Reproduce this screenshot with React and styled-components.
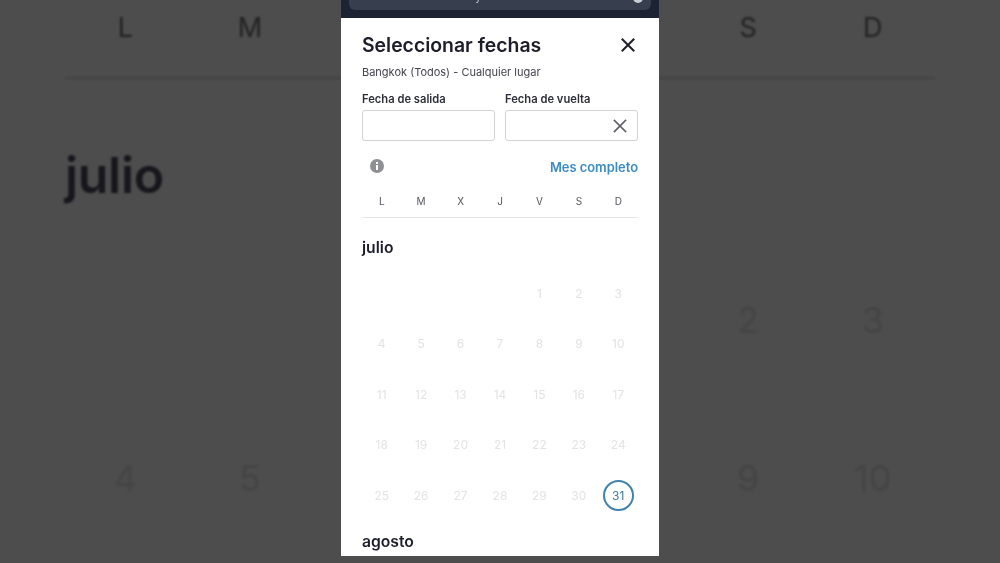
import React from 'react';
import styled, { createGlobalStyle } from 'styled-components';

const Global = createGlobalStyle`
  html, body { margin: 0; padding: 0; background: #4d4d4d; }
  body { font-family: "Inter", "Noto Sans", sans-serif; }
`;

const Page = styled.div`
  position: relative;
  width: 1000px;
  height: 563px;
  overflow: hidden;
  background: #4d4d4d;
`;

const Backdrop = styled.div`
  padding: 0 65px;
  filter: blur(0.9px);
`;

const BackWeek = styled.div`
  display: grid;
  grid-template-columns: repeat(7, 1fr);
  margin-left: -2px;
  height: 77px;
  padding-top: 10px;
  box-sizing: border-box;
  font-size: 27px;
  font-weight: 400;
  line-height: 36px;
  text-align: center;
  color: #222;
`;

const BackRule = styled.div`
  height: 2px;
  background: #444242;
`;

const BackMonth = styled.div`
  margin-top: 66px;
  font-size: 50px;
  font-weight: 600;
  letter-spacing: -0.3px;
  line-height: 60px;
  color: #16161c;
`;

const BackDays = styled.div`
  display: grid;
  grid-template-columns: repeat(7, 1fr);
  grid-auto-rows: 158px;
  margin: 90px 0 0 -2px;
  font-size: 36px;
  line-height: 50px;
  text-align: center;
  color: #454545;
`;

const Modal = styled.div`
  position: absolute;
  top: 0;
  left: 341px;
  width: 318px;
  height: 556px;
  overflow: hidden;
  background: #fff;
  filter: blur(0.35px);
`;

const TopBar = styled.div`
  height: 18px;
  padding: 0 8px;
  box-sizing: border-box;
  background: #1c2333;
`;

const TopField = styled.div`
  display: flex;
  justify-content: space-between;
  align-items: flex-start;
  height: 10px;
  padding: 0 12px;
  overflow: hidden;
  border-radius: 0 0 6px 6px;
  background: #373e4e;
  color: #aeb2bb;
`;

const TopText = styled.span`
  font-size: 12px;
  line-height: 12px;
  margin: -10px 0 0 114px;
`;

const TopDot = styled.span`
  width: 10px;
  height: 10px;
  margin: -7px -4px 0 0;
  border-radius: 50%;
  background: #c9ccd2;
`;

const Body = styled.div`
  padding: 0 21px;
`;

const TitleRow = styled.div`
  display: flex;
  justify-content: space-between;
  align-items: center;
  height: 26px;
  margin-top: 14px;
`;

const Title = styled.h1`
  margin: 0;
  font-size: 19.4px;
  font-weight: 600;
  white-space: nowrap;
  color: #1d1d2c;
`;

const IconButton = styled.span`
  display: flex;
  color: ${p => p.$color};
  margin-right: ${p => p.$inset || 0}px;
`;

const Subtitle = styled.div`
  margin-top: 6px;
  font-size: 11px;
  line-height: 16px;
  color: #42424f;
`;

const Fields = styled.div`
  display: grid;
  grid-template-columns: 133px 133px;
  justify-content: space-between;
  margin-top: 12px;
`;

const Field = styled.div`
  display: flex;
  flex-direction: column;
  gap: 3px;
`;

const FieldLabel = styled.label`
  font-size: 11.2px;
  line-height: 15px;
  font-weight: 600;
  color: #2c2c3a;
`;

const Input = styled.div`
  display: flex;
  align-items: center;
  justify-content: flex-end;
  height: 31px;
  box-sizing: border-box;
  border: 1px solid #d3d3d6;
  border-radius: 3px;
`;

const InfoRow = styled.div`
  display: flex;
  justify-content: space-between;
  align-items: center;
  height: 20px;
  margin-top: 16px;
  padding-left: 8px;
`;

const InfoIcon = styled.svg`
  margin-top: -2px;
`;

const LinkText = styled.a`
  font-size: 12.9px;
  font-weight: 600;
  white-space: nowrap;
  color: #3b8cc2;
`;

const Week = styled.div`
  display: grid;
  grid-template-columns: repeat(7, 1fr);
  height: 41px;
  padding-top: 17px;
  box-sizing: border-box;
  border-bottom: 1px solid #e6e6e8;
  font-size: 10px;
  line-height: 14px;
  text-align: center;
  color: #55555f;
`;

const Month = styled.h2`
  margin: ${p => p.$top}px 0 0;
  font-size: 15.7px;
  line-height: 20px;
  font-weight: 600;
  color: #1d1d2c;
`;

const Days = styled.div`
  display: grid;
  grid-template-columns: repeat(7, 1fr);
  grid-auto-rows: 50.5px;
  margin-top: 10px;
`;

const Day = styled.div`
  display: flex;
  align-items: center;
  justify-content: center;
  font-size: 12px;
  color: ${p => (p.$selected ? '#3c7ba5' : '#e3e3e6')};
`;

const Ring = styled.span`
  display: flex;
  align-items: center;
  justify-content: center;
  width: 31px;
  height: 31px;
  box-sizing: border-box;
  border: 2px solid #3f82ab;
  border-radius: 50%;
`;

const Cross = ({ size, width }) => (
  <svg width={size} height={size} viewBox="0 0 16 16" fill="none" stroke="currentColor" strokeWidth={width} strokeLinecap="square">
    <path d="M2.5 2.5 13.5 13.5M13.5 2.5 2.5 13.5" />
  </svg>
);

const Info = () => (
  <InfoIcon width="14" height="14" viewBox="0 0 14 14">
    <circle cx="7" cy="7" r="7" fill="#8f8f96" />
    <rect x="6" y="6" width="2" height="5" fill="#fff" />
    <rect x="6" y="3" width="2" height="2" fill="#fff" />
  </InfoIcon>
);

const WEEK = ['L', 'M', 'X', 'J', 'V', 'S', 'D'];
const BACK_WEEK = ['L', 'M', null, null, null, 'S', 'D'];
const JULY = [...Array(4).fill(null), ...Array.from({ length: 31 }, (_, i) => i + 1)];
const BACK = [null, null, null, null, null, 2, 3, 4, 5, null, null, null, 9, 10];

export default function App() {
  return (
    <Page>
      <Global />
      <Backdrop>
        <BackWeek>{BACK_WEEK.map((d, i) => <div key={i}>{d}</div>)}</BackWeek>
        <BackRule />
        <BackMonth>julio</BackMonth>
        <BackDays>{BACK.map((d, i) => <div key={i}>{d}</div>)}</BackDays>
      </Backdrop>
      <Modal>
        <TopBar>
          <TopField>
            <TopText>y</TopText>
            <TopDot />
          </TopField>
        </TopBar>
        <Body>
          <TitleRow>
            <Title>Seleccionar fechas</Title>
            <IconButton $color="#1d1d2c" $inset={2}><Cross size={16} width={2} /></IconButton>
          </TitleRow>
          <Subtitle>Bangkok (Todos) - Cualquier lugar</Subtitle>
          <Fields>
            <Field>
              <FieldLabel>Fecha de salida</FieldLabel>
              <Input />
            </Field>
            <Field>
              <FieldLabel>Fecha de vuelta</FieldLabel>
              <Input>
                <IconButton $color="#5f5f68" $inset={9}><Cross size={16} width={1.7} /></IconButton>
              </Input>
            </Field>
          </Fields>
          <InfoRow>
            <Info />
            <LinkText>Mes completo</LinkText>
          </InfoRow>
          <Week>{WEEK.map(d => <div key={d}>{d}</div>)}</Week>
          <Month $top={20}>julio</Month>
          <Days>
            {JULY.map((d, i) => (
              <Day key={i} $selected={d === 31}>{d === 31 ? <Ring>{d}</Ring> : d}</Day>
            ))}
          </Days>
          <Month $top={11}>agosto</Month>
        </Body>
      </Modal>
    </Page>
  );
}
